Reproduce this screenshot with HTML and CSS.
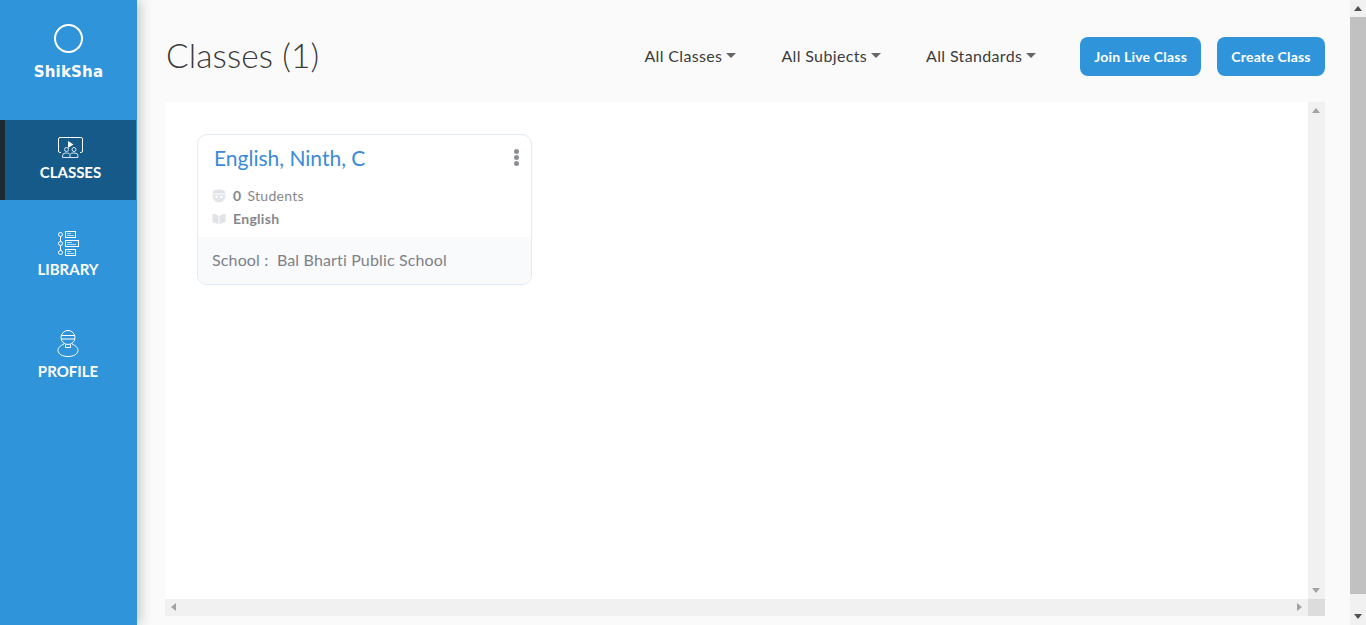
FILE: index.html
```
<!DOCTYPE html>
<html lang="en">
<head>
<meta charset="utf-8">
<title>Classes</title>
<link rel="stylesheet" href="styles.css">
</head>
<body>
<aside class="sidebar">
  <div class="brand">
    <span class="brand-ring"></span>
    <span class="brand-name">ShikSha</span>
  </div>
  <nav class="nav">
    <a class="nav-item nav-classes">
      <svg class="nav-icon" width="25" height="21" viewBox="0 0 25 21" fill="none" stroke="#fff" stroke-width="1">
        <path d="M3 15.500H2a1.500 1.500 0 0 1-1.500-1.500V2A1.500 1.500 0 0 1 2 .5h21A1.500 1.500 0 0 1 24.500 2v12a1.500 1.500 0 0 1-1.500 1.500h-1"/>
        <path d="M10 4l5.500 3.500L10 11z" fill="#fff" stroke="none"/>
        <g stroke="#d5e6f2">
          <circle cx="8.500" cy="12.500" r="2"/><circle cx="16" cy="12.500" r="2"/>
          <path d="M4.500 20.500v-1.500a3 3 0 0 1 3-3h2a3 3 0 0 1 2.500 1.500A3 3 0 0 1 15 16h2a3 3 0 0 1 3 3v1.500zM12 17.500v3"/>
        </g>
      </svg>
      <span>CLASSES</span>
    </a>
    <a class="nav-item nav-library">
      <svg class="nav-icon" width="21" height="25" viewBox="0 0 21 25" fill="none" stroke="#fff" stroke-width="1">
        <circle cx="2.500" cy="3.500" r="2"/><circle cx="2.500" cy="12.500" r="2"/><circle cx="2.500" cy="21.500" r="2"/>
        <path d="M2.500 5.500v5M2.500 14.500v5"/>
        <rect x="7.500" y=".5" width="10" height="6"/><rect x="7.500" y="9.500" width="13" height="6"/><rect x="7.500" y="18.500" width="10" height="6"/>
        <path d="M9 2.500h4M9 4.500h7M9 11.500h5M9 13.500h9M9 20.500h4M9 22.500h7" stroke="#bcdcf3"/>
      </svg>
      <span>LIBRARY</span>
    </a>
    <a class="nav-item nav-profile">
      <svg class="nav-icon" width="22" height="27" viewBox="0 0 22 27" fill="none" stroke="#fff" stroke-width="1">
        <circle cx="11" cy="7.500" r="7"/>
        <path d="M4.300 5.500h13.400M4.300 9h13.400"/>
        <path d="M7 14C3.500 15.500 1 17.500 1 20.500c0 3.500 4.500 6 10 6s10-2.500 10-6c0-3-2.500-5-6-6.500"/>
        <path d="M8.500 14.500v3h5v-3"/>
      </svg>
      <span>PROFILE</span>
    </a>
  </nav>
</aside>

<main class="main">
  <header class="topbar">
    <h1 class="title">Classes (1)</h1>
    <div class="actions">
      <div class="filters">
        <button class="filter">All Classes<i class="caret"></i></button>
        <button class="filter">All Subjects<i class="caret"></i></button>
        <button class="filter">All Standards<i class="caret"></i></button>
      </div>
      <div class="buttons">
        <button class="btn">Join Live Class</button>
        <button class="btn">Create Class</button>
      </div>
    </div>
  </header>

  <section class="panel">
    <div class="panel-view">
      <article class="card">
        <div class="card-body">
          <div class="card-head">
            <h2 class="card-title">English, Ninth, C</h2>
            <span class="kebab"><i></i><i></i><i></i></span>
          </div>
          <div class="meta">
            <svg class="meta-icon" width="14" height="14" viewBox="0 0 14 14">
              <path d="M.5 4.500C.5 2 3 .5 7 .5s6.500 1.500 6.500 4z" fill="#dfe2e6"/>
              <path d="M.5 5.500h13c.3 4.500-2.500 8-6.500 8S.2 10 .5 5.500z" fill="#e3e6e9"/>
              <circle cx="4.500" cy="8" r="1.200" fill="#fff"/><circle cx="9.500" cy="8" r="1.200" fill="#fff"/>
            </svg>
            <b>0</b><span class="meta-label">Students</span>
          </div>
          <div class="meta">
            <svg class="meta-icon" width="14" height="12" viewBox="0 0 14 12">
              <path d="M.5 1c2.500 0 4.500.5 6 2v8.500c-1.500-1.300-3.500-2-6-2z" fill="#e0e3e7"/>
              <path d="M13.500 1c-2.500 0-4.500.5-6 2v8.500c1.500-1.300 3.500-2 6-2z" fill="#e0e3e7"/>
            </svg>
            <b>English</b>
          </div>
        </div>
        <footer class="card-foot">School :&nbsp; Bal Bharti Public School</footer>
      </article>
    </div>
    <div class="bar-v">
      <i class="arrow arrow-up"></i>
      <i class="arrow arrow-down"></i>
    </div>
    <div class="bar-h">
      <i class="arrow arrow-left"></i>
      <i class="arrow arrow-right"></i>
    </div>
    <div class="bar-corner"></div>
  </section>
</main>

<div class="page-bar">
  <i class="arrow page-up"></i>
  <div class="page-thumb"></div>
  <i class="arrow page-down"></i>
</div>
</body>
</html>
```

FILE: styles.css
```
* { box-sizing: border-box; }
html, body { height: 100%; }
body {
  margin: 0;
  height: 625px;
  overflow: hidden;
  display: flex;
  background: #fafafa;
  font-family: "Lato", "Open Sans", sans-serif;
  color: #3c3c3c;
}
.sidebar {
  width: 137px;
  flex: none;
  background: #2f94da;
  box-shadow: 3px 0 12px rgba(0, 0, 0, .22);
  position: relative;
  z-index: 2;
  color: #fff;
}
.brand {
  height: 120px;
  display: flex;
  flex-direction: column;
  align-items: center;
  padding-top: 24px;
}
.brand-ring {
  width: 29px;
  height: 29px;
  border: 2px solid #fff;
  border-radius: 50%;
}
.brand-name {
  margin-top: 9px;
  font-family: "DejaVu Sans", sans-serif;
  font-weight: 700;
  font-size: 15px;
  letter-spacing: .2px;
  line-height: 20px;
}
.nav { display: flex; flex-direction: column; }
.nav-item {
  display: flex;
  flex-direction: column;
  align-items: center;
  font-size: 15px;
  font-weight: 700;
  line-height: 18px;
  width: 136px;
}
.nav-classes {
  height: 80px;
  padding-top: 17px;
  gap: 5px;
  background: #165a8a;
  border-left: 5px solid #1b2a33;
}
.nav-library { height: 100px; padding-top: 31px; gap: 4px; }
.nav-profile { height: 100px; padding-top: 30px; gap: 5px; }
.nav-icon { display: block; flex: none; }

.main {
  flex: 1;
  min-width: 0;
  display: flex;
  flex-direction: column;
  padding: 37px 25px 9px 28px;
}
.topbar {
  height: 65px;
  flex: none;
  display: flex;
  justify-content: space-between;
  align-items: flex-start;
}
.title {
  margin: -1px 0 0 1px;
  font-size: 33.500px;
  font-weight: 300;
  line-height: 39px;
  letter-spacing: .1px;
  color: #3a3a3a;
}
.actions { display: flex; align-items: center; }
.filters { display: flex; gap: 45px; margin-right: 44px; }
.filter {
  border: 0;
  padding: 0 0 2px;
  background: none;
  font: inherit;
  font-size: 16px;
  letter-spacing: .35px;
  line-height: 37px;
  color: #3c3c3c;
  display: flex;
  align-items: center;
}
.caret {
  margin-left: 4px;
  border-style: solid;
  border-width: 5px 5px 0;
  border-color: #666 transparent transparent;
}
.buttons { display: flex; gap: 16px; }
.btn {
  height: 39px;
  min-width: 108px;
  padding: 0 14px;
  border: 0;
  border-radius: 8px;
  background: #2f94da;
  color: #fff;
  font: inherit;
  font-size: 14px;
  font-weight: 700;
  letter-spacing: .2px;
}
.panel {
  flex: 1;
  min-height: 0;
  display: grid;
  grid-template-columns: 1fr 17px;
  grid-template-rows: 1fr 17px;
  background: #fff;
}
.panel-view { padding: 32px; min-width: 0; }
.card {
  width: 335px;
  height: 151px;
  border: 1px solid #e1ebf2;
  border-radius: 10px;
  overflow: hidden;
  display: flex;
  flex-direction: column;
}
.card-body { height: 102px; flex: none; padding: 10px 12px 0 14px; }
.card-head {
  display: flex;
  justify-content: space-between;
  align-items: flex-start;
  padding-left: 2px;
  margin-bottom: 13px;
}
.card-title {
  margin: 0;
  font-size: 21px;
  font-weight: 400;
  line-height: 26px;
  color: #3a8bd6;
}
.kebab {
  display: flex;
  flex-direction: column;
  gap: 1px;
  padding-top: 4px;
}
.kebab i { width: 5px; height: 5px; border-radius: 50%; background: #8c9096; }
.meta {
  display: flex;
  align-items: center;
  height: 23px;
  font-size: 14px;
  color: #85878c;
}
.meta-icon { flex: none; width: 14px; margin-right: 7px; }
.meta b { font-weight: 700; margin-right: 6px; letter-spacing: .3px; }
.meta-label { letter-spacing: .3px; }
.card-foot {
  flex: 1;
  background: #f8fafc;
  padding-left: 14px;
  font-size: 16px;
  letter-spacing: .15px;
  line-height: 45px;
  color: #7f8187;
}
.bar-v, .bar-h { background: #f1f1f1; position: relative; }
.bar-corner { background: #dcdcdc; }
.arrow { position: absolute; width: 0; height: 0; border-style: solid; border-color: transparent; }
.arrow-up { top: 6px; left: 4px; border-width: 0 4px 5px; border-bottom-color: #a3a3a3; }
.arrow-down { bottom: 6px; left: 4px; border-width: 5px 4px 0; border-top-color: #a3a3a3; }
.arrow-left { left: 6px; top: 4px; border-width: 4px 5px 4px 0; border-right-color: #a3a3a3; }
.arrow-right { right: 6px; top: 4px; border-width: 4px 0 4px 5px; border-left-color: #a3a3a3; }
.page-bar {
  width: 16px;
  flex: none;
  background: #f1f1f1;
  display: flex;
  flex-direction: column;
  position: relative;
  padding: 17px 0 31px;
}
.page-thumb { flex: 1; background: #c1c1c1; }
.page-up { top: 6px; left: 4px; border-width: 0 4px 5px; border-bottom-color: #505050; }
.page-down { bottom: 6px; left: 4px; border-width: 5px 4px 0; border-top-color: #505050; }
```
